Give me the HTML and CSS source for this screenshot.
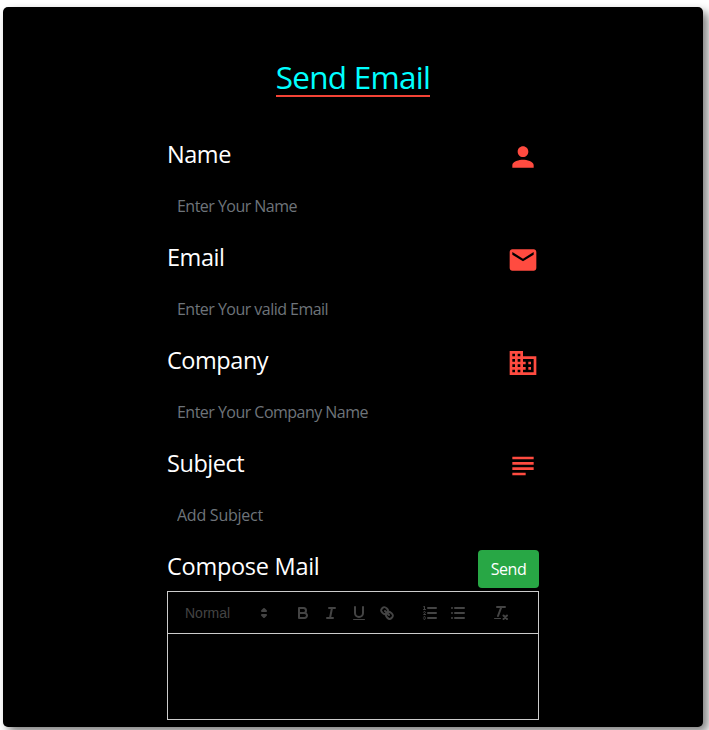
FILE: index.html
```html
<!DOCTYPE html>
<html lang="en">
<head>
<meta charset="utf-8">
<title>Send Email</title>
<link rel="stylesheet" href="styles.css">
</head>
<body>
<main class="card">
  <h1 class="title"><span class="title-text">Send Email</span></h1>
  <form class="form">
    <div class="field">
      <div class="field-head">
        <label class="label" for="name">Name</label>
        <svg class="icon" viewBox="0 0 24 24"><path d="M12 12c2.21 0 4-1.79 4-4s-1.79-4-4-4-4 1.79-4 4 1.79 4 4 4zm0 2c-2.67 0-8 1.34-8 4v2h16v-2c0-2.66-5.33-4-8-4z"/></svg>
      </div>
      <input class="input" id="name" placeholder="Enter Your Name">
    </div>
    <div class="field">
      <div class="field-head">
        <label class="label" for="email">Email</label>
        <svg class="icon" viewBox="0 0 24 24"><path d="M20 4H4c-1.1 0-1.99.9-1.99 2L2 18c0 1.1.9 2 2 2h16c1.1 0 2-.9 2-2V6c0-1.1-.9-2-2-2zm0 4l-8 5-8-5V6l8 5 8-5v2z"/></svg>
      </div>
      <input class="input" id="email" placeholder="Enter Your valid Email">
    </div>
    <div class="field">
      <div class="field-head">
        <label class="label" for="company">Company</label>
        <svg class="icon" viewBox="0 0 24 24"><path d="M12 7V3H2v18h20V7H12zM6 19H4v-2h2v2zm0-4H4v-2h2v2zm0-4H4V9h2v2zm0-4H4V5h2v2zm4 12H8v-2h2v2zm0-4H8v-2h2v2zm0-4H8V9h2v2zm0-4H8V5h2v2zm10 12h-8v-2h2v-2h-2v-2h2v-2h-2V9h8v10zm-2-8h-2v2h2v-2zm0 4h-2v2h2v-2z"/></svg>
      </div>
      <input class="input" id="company" placeholder="Enter Your Company Name">
    </div>
    <div class="field">
      <div class="field-head">
        <label class="label" for="subject">Subject</label>
        <svg class="icon" viewBox="0 0 24 24"><path d="M14 17H4v2h10v-2zm6-8H4v2h16V9zM4 15h16v-2H4v2zM4 5v2h16V5H4z"/></svg>
      </div>
      <input class="input input-loose" id="subject" placeholder="Add Subject">
    </div>
    <div class="compose">
      <span class="label">Compose Mail</span>
      <button class="send" type="button">Send</button>
    </div>
    <div class="editor">
      <div class="toolbar">
        <div class="picker">
          <span>Normal</span>
          <svg class="tool-icon" viewBox="0 0 18 18"><polygon class="solid" points="7 11 9 13 11 11 7 11"/><polygon class="solid" points="7 7 9 5 11 7 7 7"/></svg>
        </div>
        <div class="group">
          <span class="tool"><svg class="tool-icon" viewBox="0 0 18 18"><path d="M5,4H9.500A2.500,2.500,0,0,1,12,6.500v0A2.500,2.500,0,0,1,9.500,9H5V4Z"/><path d="M5,9h5.500A2.500,2.500,0,0,1,13,11.500v0A2.500,2.500,0,0,1,10.500,14H5V9Z"/></svg></span>
          <span class="tool"><svg class="tool-icon" viewBox="0 0 18 18"><path d="M7,4H13M5,14H11M8,14L10,4"/></svg></span>
          <span class="tool"><svg class="tool-icon" viewBox="0 0 18 18"><path d="M5,3V9a4.012,4.012,0,0,0,4,4H9a4.012,4.012,0,0,0,4-4V3"/><rect class="fill" height="1" rx="0.5" ry="0.5" width="12" x="3" y="15"/></svg></span>
          <span class="tool"><svg class="tool-icon" viewBox="0 0 18 18"><path d="M7,7L11,11"/><path d="M8.900,4.577a3.476,3.476,0,0,1,.36,4.679A3.476,3.476,0,0,1,4.577,8.900C3.185,7.500,2.035,6.400,4.217,4.217S7.500,3.185,8.900,4.577Z"/><path d="M13.423,9.100a3.476,3.476,0,0,0-4.679-.36,3.476,3.476,0,0,0,.36,4.679c1.392,1.392,2.500,2.542,4.679.36S14.815,10.500,13.423,9.100Z"/></svg></span>
        </div>
        <div class="group">
          <span class="tool"><svg class="tool-icon" viewBox="0 0 18 18"><path d="M7,4H15M7,9H15M7,14H15"/><path class="thin" d="M2.500,5.500H4.500"/><path class="fill" d="M3.500,6A0.500,0.500,0,0,1,3,5.500V3.085l-0.276.138A0.500,0.500,0,0,1,2.053,3c-0.124-.247-0.023-0.324.224-0.447l1-.5A0.500,0.500,0,0,1,4,2.500v3A0.500,0.500,0,0,1,3.500,6Z"/><path class="thin" d="M4.500,10.500h-2c0-.234,1.850-1.076,1.850-2.234A0.959,0.959,0,0,0,2.500,8.156"/><path class="thin" d="M2.500,14.846a0.959,0.959,0,0,0,1.850-.109A0.700,0.700,0,0,0,3.750,14a0.688,0.688,0,0,0,.6-0.736,0.959,0.959,0,0,0-1.850-.109"/></svg></span>
          <span class="tool"><svg class="tool-icon" viewBox="0 0 18 18"><path d="M6,4H15M6,9H15M6,14H15M3,4H3M3,9H3M3,14H3"/></svg></span>
        </div>
        <div class="group">
          <span class="tool"><svg class="tool-icon" viewBox="0 0 18 18"><path d="M5,3H13M6,12L9.350,3M11.500,11.500L15,15M15,11.500L11.500,15"/><rect class="fill" height="1" rx="0.5" ry="0.5" width="7" x="2" y="14"/></svg></span>
        </div>
      </div>
      <div class="content" contenteditable="true"></div>
    </div>
  </form>
</main>
</body>
</html>
```
FILE: styles.css
```css
* { box-sizing: border-box; }
body {
  margin: 0;
  height: 730px;
  overflow: hidden;
  background: #fff;
  font-family: "Segoe UI", "Open Sans", sans-serif;
}
.card {
  width: 700px;
  height: 720px;
  margin: 7px 0 0 3px;
  padding-top: 48px;
  background: #000;
  border-radius: 5px;
  box-shadow: 5px 5px 10px #808080;
}
.title {
  display: flex;
  justify-content: center;
  height: 42px;
  margin: 0 0 44px;
  font-size: 31.5px;
  font-weight: 400;
  line-height: 44px;
  color: #0ff;
}
.title-text {
  height: 42px;
  border-bottom: 2px solid #f44336;
  letter-spacing: -.75px;
}
.form { width: 372px; margin: 0 auto 0 164px; }
.field { height: 103px; }
.field-head { display: flex; justify-content: space-between; height: 32px; }
.label {
  font-size: 23.5px;
  line-height: 27px;
  color: #fff;
  letter-spacing: -.45px;
}
.icon { width: 32px; height: 32px; fill: #ff4b40; }
.input {
  display: block;
  width: 100%;
  height: 38px;
  margin-top: 14px;
  padding: 0 10px;
  border: 0;
  outline: 0;
  background: transparent;
  font: 16px/24px "Segoe UI", "Open Sans", sans-serif;
  color: #fff;
  letter-spacing: -.53px;
}
.input-loose { letter-spacing: -.25px; }
.input::placeholder { color: #6e747a; opacity: 1; }
.compose { display: flex; justify-content: space-between; height: 38px; margin-top: -3px; }
.compose .label { padding-top: 3px; letter-spacing: -.27px; }
.send {
  width: 61px;
  height: 38px;
  padding: 0;
  border: 0;
  border-radius: 4px;
  background: #28a745;
  color: #fff;
  font: 16px/24px "Segoe UI", "Open Sans", sans-serif;
  letter-spacing: -.5px;
}
.editor { height: 129px; margin-top: 3px; border: 1px solid #ccc; }
.toolbar {
  display: flex;
  height: 42px;
  padding: 9px 8px 8px;
  border-bottom: 1px solid #ccc;
}
.picker {
  display: flex;
  align-items: center;
  justify-content: space-between;
  width: 98px;
  height: 24px;
  margin-right: 15px;
  padding: 0 1px 0 9px;
  font: 500 14px/24px "Liberation Sans", Arial, sans-serif;
  color: #444;
}
.group { display: flex; height: 24px; margin-right: 15px; }
.tool { width: 28px; height: 24px; padding: 3px 5px; }
.tool-icon {
  display: block;
  width: 18px;
  height: 18px;
  fill: none;
  stroke: #444;
  stroke-width: 2;
  stroke-linecap: round;
  stroke-linejoin: round;
}
.tool-icon .fill { fill: #444; stroke: none; }
.tool-icon .solid { fill: #444; }
.tool-icon .thin { stroke-width: 1; }
.content { height: 85px; outline: 0; }
```
